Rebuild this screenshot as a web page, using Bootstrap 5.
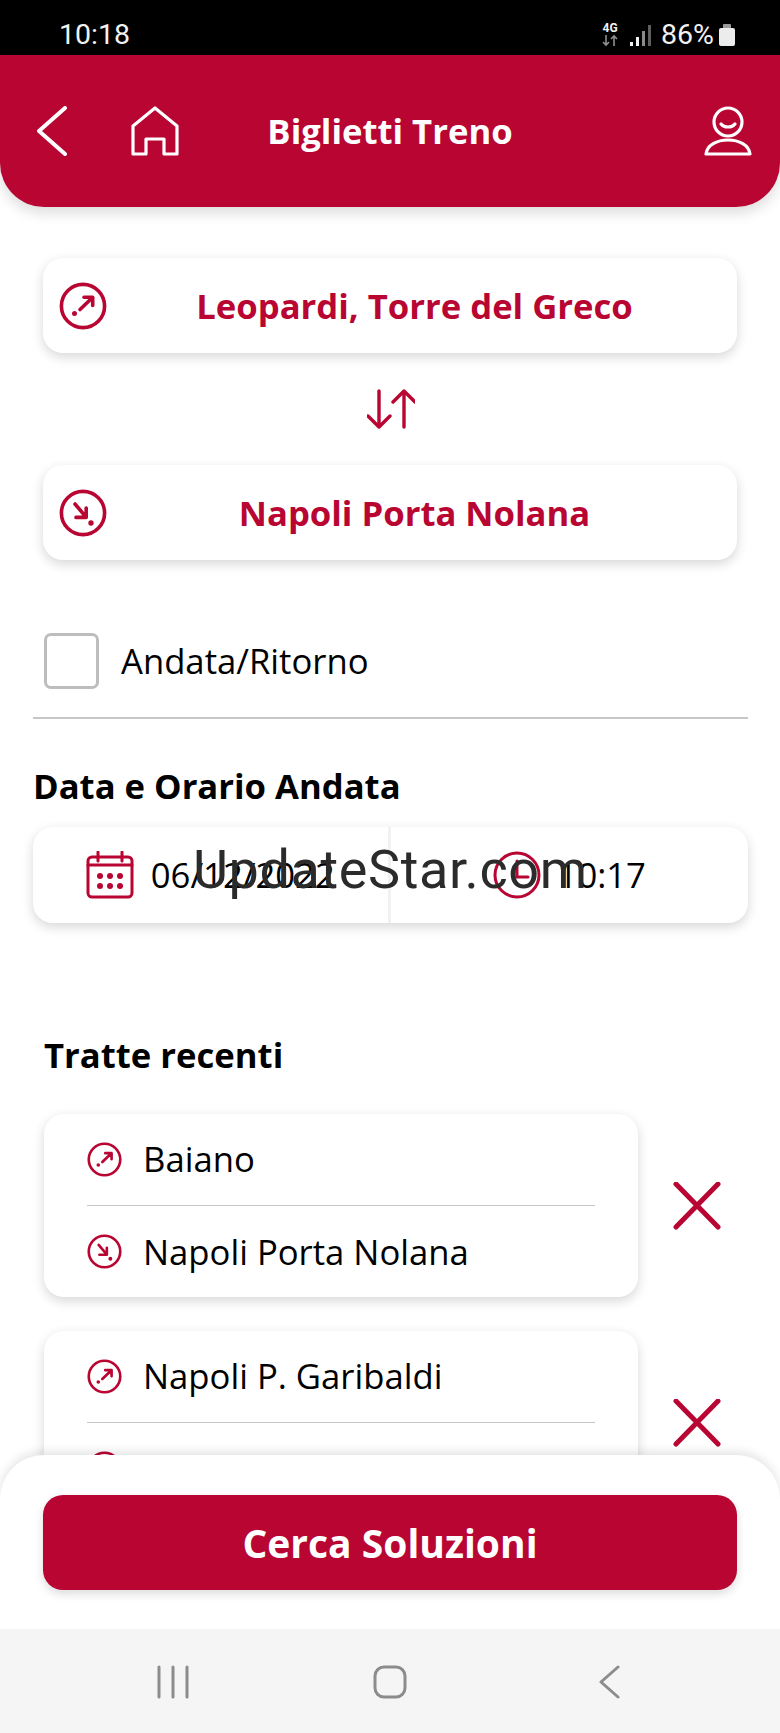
<!DOCTYPE html>
<html lang="it">
<head>
<meta charset="utf-8">
<title>Biglietti Treno</title>
<link href="https://cdn.jsdelivr.net/npm/bootstrap@5.3.0/dist/css/bootstrap.min.css" rel="stylesheet">
<style>
:root { --rosso: #b80532; }
html, body { margin: 0; background: #fff; }
body { font-family: "Open Sans", sans-serif; color: #000; }
.telefono { width: 780px; height: 1733px; overflow: hidden; position: relative; background: #fff; }
.stato { height: 55px; background: #000; color: #f2f2f2; font-family: Roboto, sans-serif; font-size: 28.5px; padding: 15px 45px 0 59px; flex: none; }
.stato-rete { font-size: 12px; line-height: 11px; font-weight: 700; text-align: center; width: 18px; margin-right: 11px; }
.stato-tacche { margin-right: 10px; }
.stato-batteria { margin-left: 5px; }
.testata { height: 152px; flex: none; background: var(--rosso); color: #fff; border-radius: 0 0 44px 44px; padding: 0 28px; display: grid; grid-template-columns: 1fr auto 1fr; align-items: center; box-shadow: 0 6px 14px rgba(0,0,0,.14); position: relative; z-index: 2; }
.testata-titolo { font-size: 34.67px; font-weight: 700; line-height: 44px; margin: 0; }
.ind { margin-left: 9px; }
.casa { margin-left: 64px; }
.corpo { padding: 51px 32px 0 33px; }
.scheda { background: #fff; border: 0; border-radius: 20px; box-shadow: 0 4px 12px rgba(0,0,0,.16); }
.stazione { height: 95px; margin: 0 11px 0 10px; padding: 0 15px 0 16px; color: var(--rosso); font-size: 34.67px; font-weight: 700; }
.stazione-nome { flex: 1 1 auto; text-align: center; }
.scambio { height: 112px; }
.opzione { margin: 73px 0 0 11px; height: 55px; }
.casella { width: 55px; height: 56px; border: 3px solid #bdbdbd; border-radius: 7px; margin-right: 22px; flex: none; }
.opzione-testo { font-size: 34.67px; line-height: 44px; }
.riga { height: 2px; background: #c6c6c6; }
.riga-sep { margin-top: 29px; }
.sottotitolo { font-size: 34.67px; font-weight: 700; line-height: 44px; margin: 0; }
.sotto-data { margin-top: 45px; }
.data-scheda { height: 96px; margin-top: 19px; font-size: 34.67px; position: relative; }
.data-meta { width: 50%; height: 100%; gap: 17px; }
.data-divisa { border-right: 3px solid #f1f1f1; }
.filigrana { position: absolute; left: 160px; top: 6px; font-family: Roboto, sans-serif; font-size: 54px; letter-spacing: .6px; line-height: 74px; color: #2b2b2b; white-space: nowrap; }
.sotto-tratte { margin: 110px 0 37px 11px; }
.tratta { margin-left: 11px; margin-bottom: 34px; }
.tratta-scheda { width: 594px; height: 183px; padding: 0 43px; flex: none; font-size: 34.67px; }
.tratta-riga { height: 91px; gap: 21px; }
.tratta-riga svg { flex: none; }
.chiudi { margin-left: 35px; }
.fondo { position: absolute; left: 0; right: 0; top: 1455px; height: 174px; background: #fff; border-radius: 44px 44px 0 0; box-shadow: 0 -4px 10px rgba(0,0,0,.10); padding: 40px 43px 0; z-index: 3; }
.btn.cerca { display: block; width: 100%; height: 95px; background: var(--rosso); border: 0; border-radius: 20px; color: #fff; font-size: 39px; font-weight: 700; line-height: 95px; padding: 0; box-shadow: 0 4px 10px rgba(0,0,0,.14); }
.nav-sistema { position: absolute; left: 0; right: 0; top: 1629px; height: 104px; background: #f5f5f5; z-index: 4; padding-top: 36px; display: grid; grid-template-columns: 1fr auto 1fr; align-items: start; }
.nav-linee { margin-left: 157px; }
.nav-indietro { justify-self: end; margin-right: 160px; }
</style>
</head>
<body>
<svg width="0" height="0" class="d-block" aria-hidden="true">
  <symbol id="parte" viewBox="0 0 48 48"><g fill="none" stroke="#b80532" stroke-width="3.6" stroke-linecap="round" stroke-linejoin="round"><circle cx="24" cy="24" r="21.6"/><path d="M21 27.5 33.5 15.5M25 15.3H33.7V23.5"/></g><circle cx="15.5" cy="31.5" r="2.5" fill="#b80532"/></symbol>
  <symbol id="arriva" viewBox="0 0 48 48"><g fill="none" stroke="#b80532" stroke-width="3.6" stroke-linecap="round" stroke-linejoin="round"><circle cx="24" cy="24" r="21.6"/><path d="M16 15 27 28M17 28.4H27.2V19"/></g><circle cx="32" cy="34" r="2.7" fill="#b80532"/></symbol>
  <symbol id="croce" viewBox="0 0 48 48"><path d="M3 2 45 45M45 2 3 45" fill="none" stroke="#b80532" stroke-width="5" stroke-linecap="round"/></symbol>
</svg>
<div class="telefono d-flex flex-column">
  <div class="stato d-flex align-items-center justify-content-between">
    <span>10:18</span>
    <div class="d-flex align-items-center">
      <div class="stato-rete">4G<svg width="18" height="13" viewBox="0 0 18 13" class="d-block"><path d="M5 1V11M2 8l3 3 3-3M13 12V2M10 5l3-3 3 3" fill="none" stroke="#8f8f8f" stroke-width="1.6"/></svg></div>
      <svg class="stato-tacche" width="21" height="24" viewBox="0 0 21 24"><g fill="#f2f2f2"><rect x="0" y="19" width="3" height="4"/><rect x="6" y="14" width="3" height="9"/></g><g fill="#8a8a8a"><rect x="12" y="8" width="3" height="15"/></g><g fill="#5f5f5f"><rect x="18" y="2" width="3" height="21"/></g></svg>
      <span>86%</span>
      <svg class="stato-batteria" width="16" height="22" viewBox="0 0 16 22"><path d="M5 0h6a1 1 0 0 1 1 1v3H4V1a1 1 0 0 1 1-1z" fill="#9c9c9c"/><path d="M2 4h12a2 2 0 0 1 2 2v14a2 2 0 0 1-2 2H2a2 2 0 0 1-2-2V6a2 2 0 0 1 2-2z" fill="#ececec"/></svg>
    </div>
  </div>

  <header class="testata">
    <div class="d-flex align-items-center">
      <svg class="ind" width="30" height="50" viewBox="0 0 30 50"><path d="M28 2 2 25 28 48" fill="none" stroke="#fff" stroke-width="4" stroke-linecap="round" stroke-linejoin="round"/></svg>
      <svg class="casa" width="48" height="50" viewBox="0 0 48 50"><path d="M2 48V20L24 2 46 20V48H33V33H15V48Z" fill="none" stroke="#fff" stroke-width="3.2" stroke-linejoin="round"/></svg>
    </div>
    <h1 class="testata-titolo">Biglietti Treno</h1>
    <div class="d-flex justify-content-end">
      <svg width="48" height="50" viewBox="0 0 48 50"><g fill="none" stroke="#fff" stroke-width="3.2" stroke-linecap="round" stroke-linejoin="round"><circle cx="24" cy="16" r="14"/><path d="M17 18c3 4 11 4 14 0"/><path d="M2 48C3 39 13 34 24 34S45 39 46 48Z"/></g></svg>
    </div>
  </header>

  <main class="corpo">
    <div class="card scheda stazione flex-row align-items-center">
      <svg width="48" height="48"><use href="#parte"/></svg>
      <div class="stazione-nome">Leopardi, Torre del Greco</div>
    </div>
    <div class="scambio d-flex align-items-center justify-content-center">
      <svg width="48" height="40" viewBox="0 0 48 40"><path d="M12 2V38M1 27 12 38 23 27M37 38V2M26 13 37 2 48 13" fill="none" stroke="#b80532" stroke-width="3.4" stroke-linecap="round" stroke-linejoin="round"/></svg>
    </div>
    <div class="card scheda stazione flex-row align-items-center">
      <svg width="48" height="48"><use href="#arriva"/></svg>
      <div class="stazione-nome">Napoli Porta Nolana</div>
    </div>

    <div class="opzione d-flex align-items-center">
      <div class="casella"></div>
      <span class="opzione-testo">Andata/Ritorno</span>
    </div>
    <div class="riga riga-sep"></div>

    <h2 class="sottotitolo sotto-data">Data e Orario Andata</h2>
    <div class="card scheda data-scheda flex-row">
      <div class="data-meta data-divisa d-flex align-items-center justify-content-center">
        <svg width="48" height="48" viewBox="0 0 48 48"><g fill="none" stroke="#b80532" stroke-width="3" stroke-linecap="round"><rect x="2" y="6" width="44" height="40" rx="4"/><path d="M12 1V10M36 1V10M2 14H46"/></g><g fill="#b80532"><circle cx="14" cy="25" r="3"/><circle cx="24" cy="25" r="3"/><circle cx="34" cy="25" r="3"/><circle cx="14" cy="35" r="3"/><circle cx="24" cy="35" r="3"/><circle cx="34" cy="35" r="3"/></g></svg>
        <span>06/12/2022</span>
      </div>
      <div class="data-meta d-flex align-items-center justify-content-center">
        <svg width="48" height="48" viewBox="0 0 48 48"><g fill="none" stroke="#b80532" stroke-width="3" stroke-linecap="round" stroke-linejoin="round"><circle cx="24" cy="24" r="22"/><path d="M24 10V26H35"/></g></svg>
        <span>10:17</span>
      </div>
      <div class="filigrana">UpdateStar.com</div>
    </div>

    <h2 class="sottotitolo sotto-tratte">Tratte recenti</h2>

    <div class="tratta d-flex align-items-center">
      <div class="card scheda tratta-scheda">
        <div class="tratta-riga d-flex align-items-center"><svg width="35" height="35"><use href="#parte"/></svg><span>Baiano</span></div>
        <div class="riga"></div>
        <div class="tratta-riga d-flex align-items-center"><svg width="35" height="35"><use href="#arriva"/></svg><span>Napoli Porta Nolana</span></div>
      </div>
      <svg class="chiudi" width="48" height="48"><use href="#croce"/></svg>
    </div>

    <div class="tratta d-flex align-items-center">
      <div class="card scheda tratta-scheda">
        <div class="tratta-riga d-flex align-items-center"><svg width="35" height="35"><use href="#parte"/></svg><span>Napoli P. Garibaldi</span></div>
        <div class="riga"></div>
        <div class="tratta-riga d-flex align-items-center"><svg width="35" height="35"><use href="#arriva"/></svg><span>Baiano</span></div>
      </div>
      <svg class="chiudi" width="48" height="48"><use href="#croce"/></svg>
    </div>
  </main>

  <div class="fondo">
    <button type="button" class="btn cerca">Cerca Soluzioni</button>
  </div>

  <nav class="nav-sistema">
    <svg class="nav-linee" width="32" height="34" viewBox="0 0 32 34"><path d="M2 2V32M16 2V32M30 2V32" stroke="#8c8c8c" stroke-width="3" fill="none" stroke-linecap="round"/></svg>
    <svg width="34" height="34" viewBox="0 0 34 34"><rect x="2" y="2" width="30" height="30" rx="9" fill="none" stroke="#8c8c8c" stroke-width="3"/></svg>
    <svg class="nav-indietro" width="21" height="34" viewBox="0 0 21 34"><path d="M19 2 2 17 19 32" fill="none" stroke="#8c8c8c" stroke-width="3" stroke-linecap="round" stroke-linejoin="round"/></svg>
  </nav>
</div>
</body>
</html>
